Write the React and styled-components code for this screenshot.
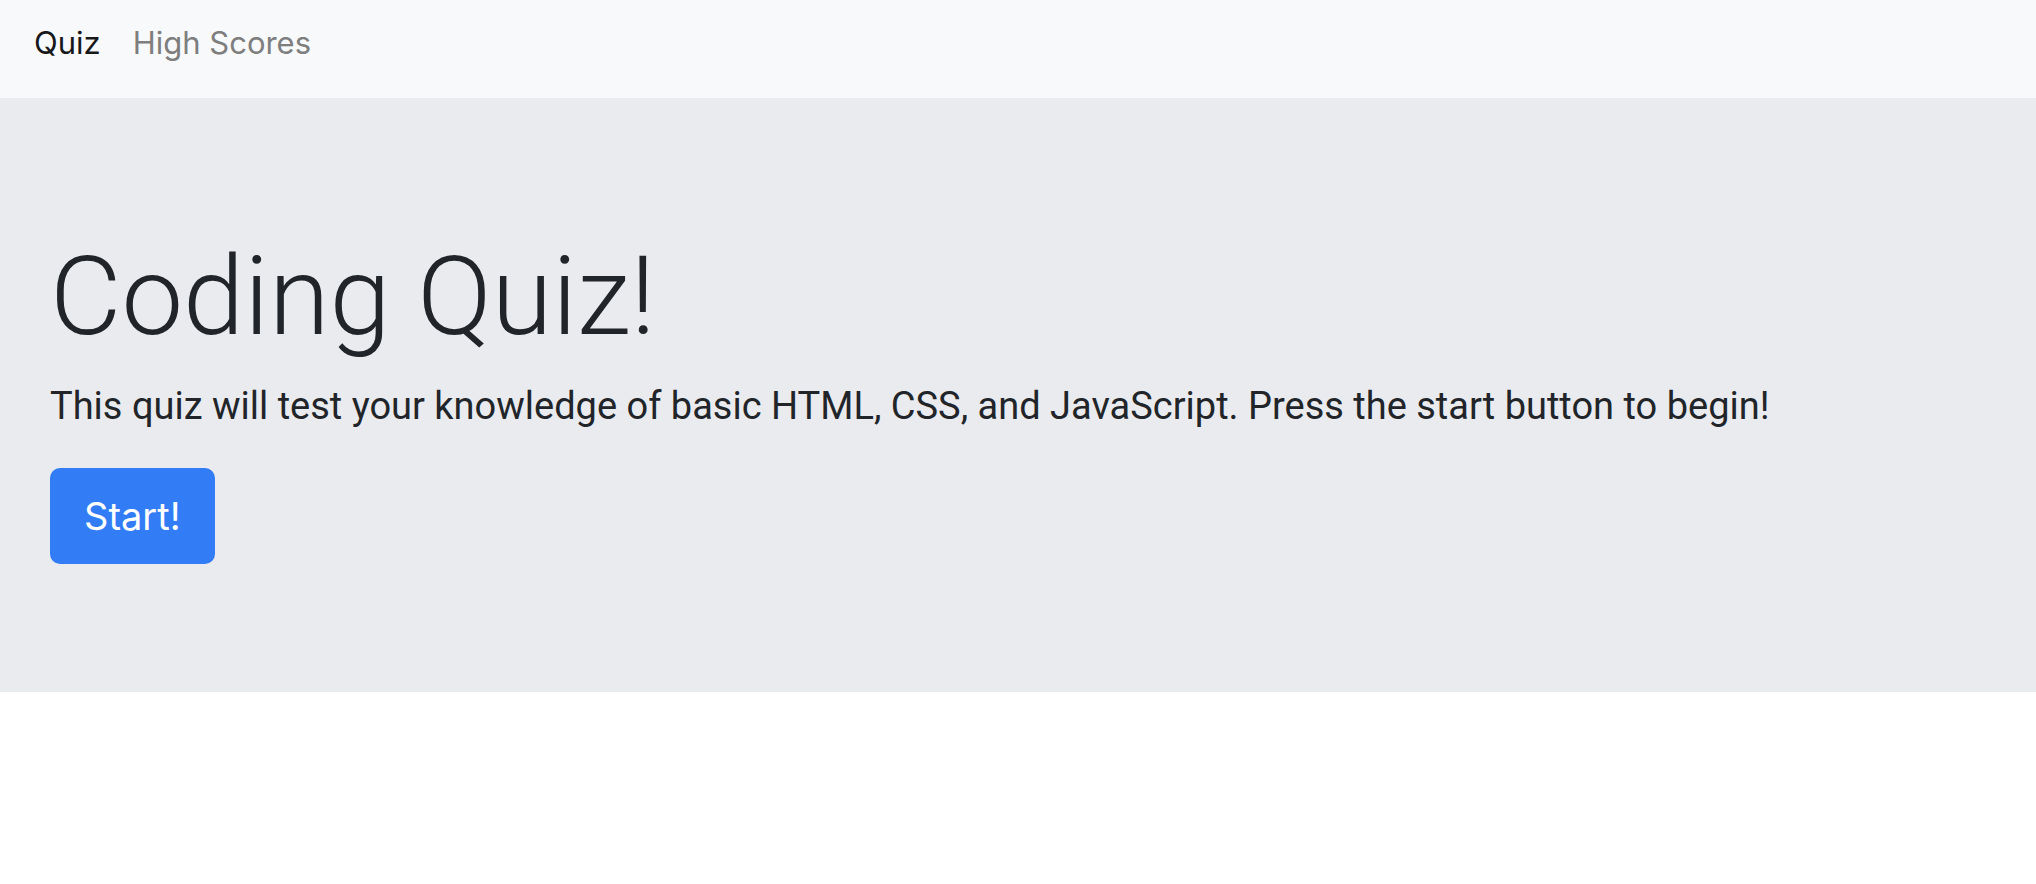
import React from 'react';
import styled, { createGlobalStyle } from 'styled-components';

const GlobalStyle = createGlobalStyle`
  *, *::before, *::after { box-sizing: border-box; }
  body {
    margin: 0;
    background: #ffffff;
    color: #212529;
    font-family: Inter, "Liberation Sans", sans-serif;
    font-size: 31px;
    line-height: 48px;
  }
`;

const Navbar = styled.nav`
  display: flex;
  gap: 32px;
  padding: 19px 34px 31px;
  background: #f8f9fb;
`;

const NavLink = styled.a`
  color: ${({ $active }) => ($active ? '#17181a' : '#7e7e7e')};
  text-decoration: none;
`;

const Jumbotron = styled.main`
  padding: 128px 50px;
  background: #eaebef;
`;

const Title = styled.h1`
  margin: 0 0 12px;
  padding-top: 4px;
  font-family: Roboto, "Liberation Sans", sans-serif;
  font-size: 110px;
  font-weight: 300;
  line-height: 134px;
`;

const Lead = styled.p`
  margin: 0 0 32px;
  font-family: Roboto, "Liberation Sans", sans-serif;
  font-size: 38px;
  font-weight: 400;
  line-height: 60px;
`;

const StartButton = styled.button`
  padding: 16px 32px;
  border: 2px solid #327cf6;
  border-radius: 10px;
  background: #327cf6;
  color: #ffffff;
  font: inherit;
  font-size: 38px;
  line-height: 60px;
`;

export default function App() {
  return (
    <>
      <GlobalStyle />
      <Navbar>
        <NavLink href="#quiz" aria-current="page" $active>Quiz</NavLink>
        <NavLink href="#scores">High Scores</NavLink>
      </Navbar>
      <Jumbotron>
        <Title>Coding Quiz!</Title>
        <Lead>
          This quiz will test your knowledge of basic HTML, CSS, and JavaScript. Press the start button to begin!
        </Lead>
        <StartButton type="button">Start!</StartButton>
      </Jumbotron>
    </>
  );
}
